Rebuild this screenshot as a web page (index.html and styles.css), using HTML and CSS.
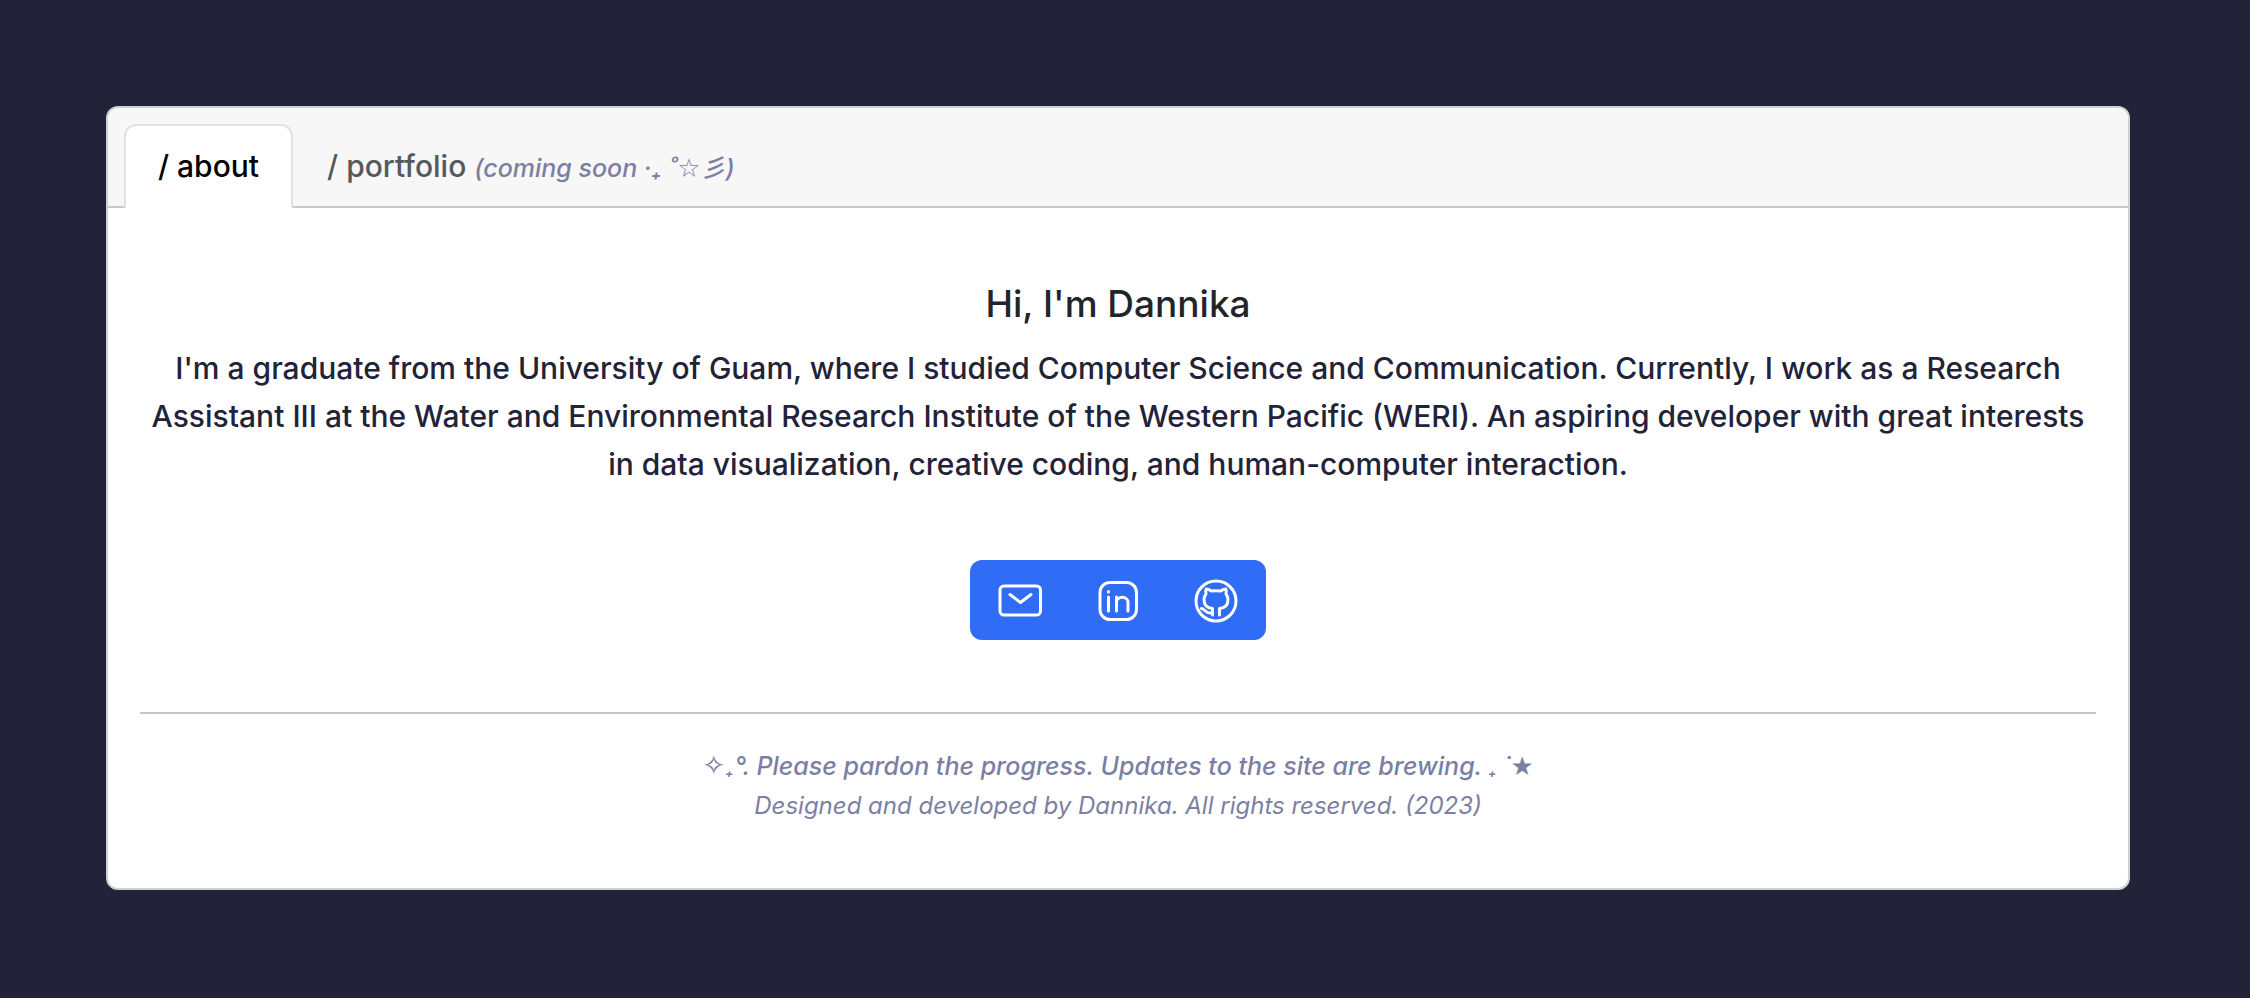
FILE: index.html
```html
<!DOCTYPE html>
<html lang="en">
<head>
<meta charset="utf-8">
<title>Dannika</title>
<link rel="stylesheet" href="styles.css">
</head>
<body>
<main class="card">
  <nav class="tabs">
    <a class="tab tab-active" href="#about">/ about</a>
    <a class="tab" href="#portfolio">/ portfolio <em class="soon">(coming soon ‧₊ ˚<span class="star">☆</span>彡)</em></a>
  </nav>
  <section class="body" id="about">
    <h1 class="title">Hi, I'm Dannika</h1>
    <p class="intro">I'm a graduate from the University of Guam, where I studied Computer Science and Communication. Currently, I work as a Research Assistant III at the Water and Environmental Research Institute of the Western Pacific (WERI). An aspiring developer with great interests in data visualization, creative coding, and human-computer interaction.</p>
    <div class="links">
      <a class="link" href="#mail" aria-label="Email">
        <svg class="icon" viewBox="0 0 48 48"><rect x="4" y="10" width="40.500" height="29" rx="4"/><path d="M14 18.500l10.500 8 10.500-8"/></svg>
      </a>
      <a class="link" href="#linkedin" aria-label="LinkedIn">
        <svg class="icon" viewBox="0 0 48 48"><rect x="6" y="6.500" width="36.500" height="37" rx="10"/><path d="M14.500 21v14M14.500 15.500v.5M22.500 21v14M22.500 26.500c0-7 11.500-7 11.500 0v8.500"/></svg>
      </a>
      <a class="link" href="#github" aria-label="GitHub">
        <svg class="icon" viewBox="0 0 48 48"><circle cx="24" cy="25" r="20"/><path d="M20.500 39v-6.500c-5-.5-8.500-3.500-8.500-9 0-2.500.8-4 2-5.500-.6-2-.4-3.500.2-5 2 0 3.500.8 5 2q4.800-.6 9.600 0c1.500-1.200 3-2 5-2 .6 1.500.8 3 .2 5 1.200 1.500 2 3 2 5.500 0 5.500-3.500 8.500-8.500 9v6.500M20 37c-7 1-6-3.500-10.500-4.500"/></svg>
      </a>
    </div>
    <footer class="footer">
      <p class="note"><span class="spark">✧</span><span class="plus">₊</span>°. Please pardon the progress. Updates to the site are brewing. <span class="plus">₊</span> ˙<span class="star">★</span></p>
      <p class="copy">Designed and developed by Dannika. All rights reserved. (2023)</p>
    </footer>
  </section>
</main>
</body>
</html>
```
FILE: styles.css
```css
* { box-sizing: border-box; }
body {
  margin: 0;
  padding: 106px 120px 100px 106px;
  background: #222238;
  color: #222238;
  font-family: Inter, "Noto Sans CJK JP", "DejaVu Sans", sans-serif;
  font-size: 30px;
  font-weight: 500;
  line-height: 48px;
}
.card {
  background: #fff;
  border: 2px solid #d0d1d3;
  border-radius: 12px;
}
.tabs {
  display: flex;
  padding: 16px 16px 0;
  background: #f7f7f7;
  border-bottom: 2px solid #c8c8c8;
  border-radius: 10px 10px 0 0;
}
.tab {
  padding: 16px 32px 18px;
  margin-bottom: -2px;
  border: 2px solid transparent;
  border-bottom: 0;
  border-radius: 12px 12px 0 0;
  color: #55595c;
  text-decoration: none;
}
.tab-active {
  background: #fff;
  border-color: #dee2e6;
  color: #000;
}
.soon { color: #7c7fa3; font-size: 25px; line-height: 1; }
.star, .spark { font-family: "DejaVu Sans", sans-serif; line-height: 1; }
.star { font-size: 26px; }
.spark { font-size: 28px; }
.plus { font-size: 20px; line-height: 1; }
.body { padding: 72px 32px 62px; text-align: center; }
.title {
  margin: 0 0 16px;
  color: #212529;
  font-size: 37px;
  font-weight: 500;
  line-height: 48px;
}
.intro { margin: 0 0 72px; }
.links {
  display: flex;
  width: fit-content;
  margin: 0 auto;
  padding: 0 1px;
  background: #306cf6;
  border-radius: 12px;
}
.link { display: flex; padding: 16px 25px; color: #fff; }
.icon {
  width: 48px;
  height: 48px;
  fill: none;
  stroke: currentColor;
  stroke-width: 3;
  stroke-linecap: round;
  stroke-linejoin: round;
}
.footer {
  margin-top: 72px;
  padding-top: 32px;
  border-top: 2px solid #c5c5c5;
  color: #7c7fa3;
  font-style: italic;
  line-height: 40px;
}
.note, .copy { margin: 0; }
.note { font-size: 25px; }
.copy { font-size: 24px; font-weight: 400; }
```
